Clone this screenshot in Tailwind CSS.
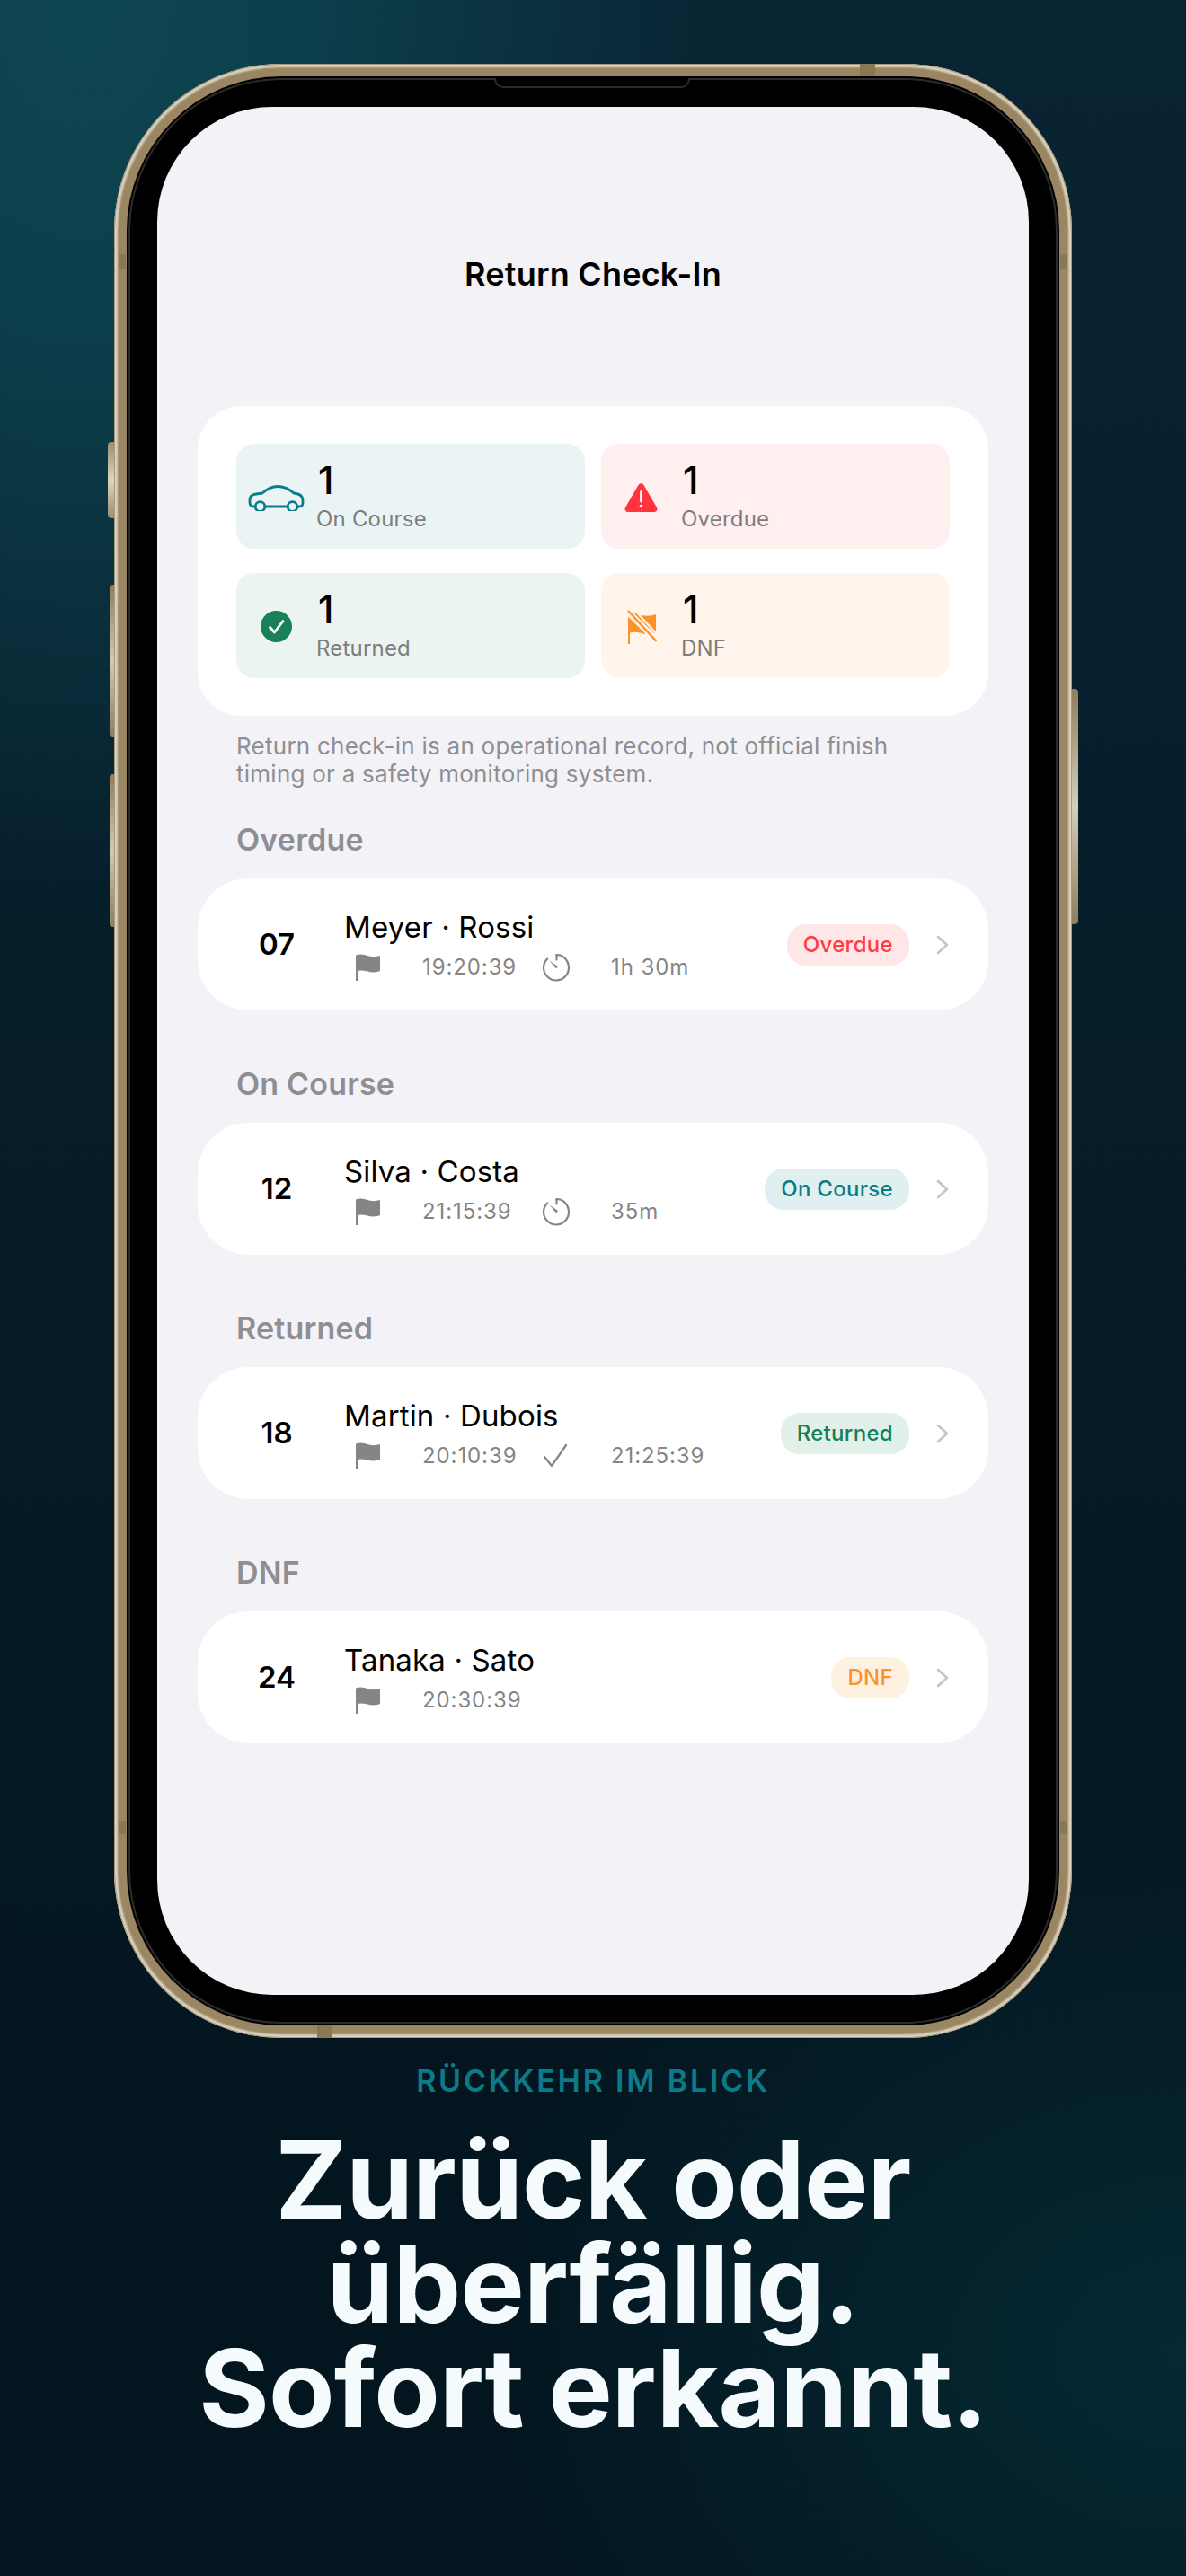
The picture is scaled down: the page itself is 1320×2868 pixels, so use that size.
<!DOCTYPE html>
<html lang="de">
<head>
<meta charset="UTF-8">
<title>Return Check-In</title>
<script src="https://cdn.jsdelivr.net/npm/@tailwindcss/browser@4"></script>
</head>
<body class="w-[1320px] h-[2868px] overflow-hidden font-[Inter,sans-serif] bg-[radial-gradient(ellipse_720px_1000px_at_90px_0px,#0e4552_0%,#0d3f4c_35%,#0e455200_100%),radial-gradient(ellipse_800px_600px_at_1320px_2620px,#052a34,#052a3400),linear-gradient(180deg,#092433,#03151f_85%)]">

<!-- shared icons -->
<svg class="hidden">
  <symbol id="flag" viewBox="0 0 28 30">
    <path d="M1 1.5C6 -0.5 10 0.5 14 2C18 3.5 23 3.5 28 2V19C23 21 18 20.5 14 19.5C10 18.500 6 18 3 19V30H1Z" fill="#858585"/>
  </symbol>
  <symbol id="timer" viewBox="0 0 32 32">
    <path d="M16.500 2C24 2 30 8.200 30 16.500C30 24 24 30.500 16 30.500C8.500 30.500 2 24 2 16.500C2 12.500 3.700 9 6.200 6.500" fill="none" stroke="#858585" stroke-width="2.200" stroke-linecap="round"/>
    <path d="M16.500 2V7.500" stroke="#858585" stroke-width="2.200" stroke-linecap="round"/>
    <path d="M8.500 8.500L18 15L16 17.500Z" fill="#858585"/>
  </symbol>
</svg>

<div class="flex flex-col items-center pt-[71px]">

  <!-- Phone -->
  <div class="relative w-[1066px] h-[2198px]">
    <!-- side buttons -->
    <div class="absolute left-[-7px] top-[421px] w-[12px] h-[85px] rounded-l-[4px] bg-linear-to-b from-[#9c8d6d] via-[#ddd6c2] to-[#9c8d6d]"></div>
    <div class="absolute left-[-5px] top-[580px] w-[10px] h-[169px] rounded-l-[3px] bg-linear-to-b from-[#8d7e5e] via-[#d2cab4] to-[#8d7e5e]"></div>
    <div class="absolute left-[-5px] top-[791px] w-[10px] h-[170px] rounded-l-[3px] bg-linear-to-b from-[#8d7e5e] via-[#d2cab4] to-[#8d7e5e]"></div>
    <div class="absolute right-[-7px] top-[696px] w-[12px] h-[262px] rounded-r-[4px] bg-linear-to-b from-[#8d7e5e] via-[#d6cfb9] to-[#8d7e5e]"></div>

    <!-- frame -->
    <div class="absolute inset-0 rounded-[186px] bg-[#9a8662] shadow-[inset_0_0_0_1px_#a99a7b,inset_0_0_2px_4px_#d9d2bf]"></div>
    <div class="absolute inset-[14px] rounded-[172px] bg-black"></div>
    <div class="absolute inset-[16px] rounded-[170px] border-2 border-[#2b2b2b]"></div>

    <!-- antenna bands -->
    <div class="absolute left-[5px] top-[212px] w-[8px] h-[17px] bg-[#8a7855]"></div>
    <div class="absolute left-[5px] top-[1956px] w-[8px] h-[15px] bg-[#8a7855]"></div>
    <div class="absolute right-[5px] top-[212px] w-[8px] h-[17px] bg-[#8a7855]"></div>
    <div class="absolute right-[5px] top-[1956px] w-[8px] h-[15px] bg-[#8a7855]"></div>
    <div class="absolute left-[830px] top-[0px] w-[17px] h-[14px] bg-[#8a7855]"></div>
    <div class="absolute left-[226px] bottom-[0px] w-[17px] h-[14px] bg-[#8a7855]"></div>

    <!-- notch -->
    <div class="absolute left-[423px] top-[16px] w-[218px] h-[11px] rounded-b-[10px] bg-black border-x-2 border-b-2 border-[#2b2b2b]"></div>

    <!-- Screen -->
    <div class="absolute left-[48px] top-[48px] w-[970px] h-[2102px] rounded-[128px] bg-[#f2f2f7] px-[45px] pt-[164px] overflow-hidden">
      <h1 class="text-[36px] leading-[44px] font-semibold text-black text-center tracking-[0.2px]">Return Check-In</h1>

      <!-- Stats -->
      <div class="mt-[125px] bg-white rounded-[48px] px-[43px] py-[42px] grid grid-cols-2 gap-x-[18px] gap-y-[27px]">
        <div class="h-[117px] rounded-[20px] bg-[#ebf4f5] flex items-center">
          <div class="w-[89px] flex justify-center pt-[2px]">
            <svg class="w-[63px] h-[30px]" viewBox="0 0 63 30" fill="none" stroke="#0a7c8a" stroke-width="2.800" stroke-linecap="round" stroke-linejoin="round">
              <path d="M8 25H6.500C3.500 25 2 23 2 20.500V18C2 13.500 5 11.500 9 11L16 10C21 5.500 26 2.500 33 2.500C41 2.500 46 5.500 51 10C56.500 10.500 61 13 61 18V21C61 24 59.500 25 57 25H55"/>
              <path d="M19 25H43"/>
              <circle cx="13.500" cy="25" r="5.300"/>
              <circle cx="49.500" cy="25" r="5.300"/>
            </svg>
          </div>
          <div class="pt-[2px]">
            <div class="ml-[2px] text-[42px] leading-[42px] font-medium text-black mb-[7px]">1</div>
            <div class="text-[24px] leading-[30px] tracking-[0.2px] text-[#7d7d7d]">On Course</div>
          </div>
        </div>
        <div class="h-[117px] rounded-[20px] bg-[#ffefef] flex items-center">
          <div class="w-[89px] flex justify-center pt-[2px]">
            <svg class="w-[37px] h-[32px]" viewBox="0 0 37 32">
              <path d="M15.500 2C16.800 -0.300 20.200 -0.300 21.500 2L36 27C37.300 29.300 35.700 32 33 32H4C1.300 32 -0.300 29.300 1 27Z" fill="#ff343d"/>
              <path d="M18.500 9.500V20" stroke="#fff" stroke-width="2.800" stroke-linecap="round"/>
              <circle cx="18.500" cy="25.500" r="1.800" fill="#fff"/>
            </svg>
          </div>
          <div class="pt-[2px]">
            <div class="ml-[2px] text-[42px] leading-[42px] font-medium text-black mb-[7px]">1</div>
            <div class="text-[24px] leading-[30px] tracking-[0.2px] text-[#7d7d7d]">Overdue</div>
          </div>
        </div>
        <div class="h-[117px] rounded-[20px] bg-[#ebf4f1] flex items-center">
          <div class="w-[89px] flex justify-center pt-[2px]">
            <svg class="w-[35px] h-[35px]" viewBox="0 0 35 35">
              <circle cx="17.500" cy="17.500" r="17.500" fill="#188158"/>
              <path d="M10.500 18.500L15.500 24L25 11.500" fill="none" stroke="#fff" stroke-width="2.800" stroke-linecap="round" stroke-linejoin="round"/>
            </svg>
          </div>
          <div class="pt-[2px]">
            <div class="ml-[2px] text-[42px] leading-[42px] font-medium text-black mb-[7px]">1</div>
            <div class="text-[24px] leading-[30px] tracking-[0.2px] text-[#7d7d7d]">Returned</div>
          </div>
        </div>
        <div class="h-[117px] rounded-[20px] bg-[#fff5ec] flex items-center">
          <div class="w-[89px] flex justify-center pt-[2px]">
            <svg class="w-[34px] h-[38px]" viewBox="0 0 34 38">
              <path d="M2 5C6 3 10 3.500 14 5C20 7 26 7.500 33 5V26C27 28 21 27 15 25.500C11 24.500 7 24.500 4 25.500V38H2Z" fill="#fd9226"/>
              <path d="M1 1.500L33 33" stroke="#fff5ec" stroke-width="7"/>
              <path d="M2 1L33.500 35" stroke="#fd9226" stroke-width="2.400"/>
              <path d="M10 1L33 26" stroke="#fff5ec" stroke-width="2.200"/>
            </svg>
          </div>
          <div class="pt-[2px]">
            <div class="ml-[2px] text-[42px] leading-[42px] font-medium text-black mb-[7px]">1</div>
            <div class="text-[24px] leading-[30px] tracking-[0.2px] text-[#7d7d7d]">DNF</div>
          </div>
        </div>
      </div>

      <p class="mt-[18px] px-[43px] text-[26px] leading-[31px] tracking-[0.25px] text-[#8e8e93]">Return check-in is an operational record, not official finish<br>timing or a safety monitoring system.</p>

      <!-- Overdue -->
      <h2 class="mt-[38px] px-[43px] text-[34px] leading-[40px] tracking-[0.2px] font-semibold text-[#8e8e93]">Overdue</h2>
      <div class="mt-[23px] h-[147px] rounded-[56px] bg-white pl-[44px] pr-[44px] flex items-center">
        <div class="w-[88px] mr-[31px] text-center text-[33px] font-semibold text-black">07</div>
        <div>
          <div class="text-[33px] leading-[40px] tracking-[0.15px] text-black">Meyer · Rossi</div>
          <div class="mt-[10px] h-[30px] flex items-center text-[24px] tracking-[0.9px] text-[#858585]">
            <div class="w-[87px] pl-[12px]"><svg class="w-[28px] h-[30px]"><use href="#flag"/></svg></div>
            <div class="w-[133px]">19:20:39</div>
            <div class="w-[77px]"><svg class="w-[32px] h-[32px]"><use href="#timer"/></svg></div>
            <div>1h 30m</div>
          </div>
        </div>
        <div class="ml-auto h-[46px] px-[18px] rounded-[21px] bg-[#ffe6e7] text-[#ff3b45] text-[24px] tracking-[0.3px] font-medium flex items-center">Overdue</div>
        <svg class="ml-[30px] w-[14px] h-[22px]" viewBox="0 0 14 22" fill="none" stroke="#c4c4c7" stroke-width="2.600" stroke-linecap="round" stroke-linejoin="round"><path d="M2 2L12 11L2 20"/></svg>
      </div>

      <!-- On Course -->
      <h2 class="mt-[62px] px-[43px] text-[34px] leading-[40px] tracking-[0.2px] font-semibold text-[#8e8e93]">On Course</h2>
      <div class="mt-[23px] h-[147px] rounded-[56px] bg-white pl-[44px] pr-[44px] flex items-center">
        <div class="w-[88px] mr-[31px] text-center text-[33px] font-semibold text-black">12</div>
        <div>
          <div class="text-[33px] leading-[40px] tracking-[0.15px] text-black">Silva · Costa</div>
          <div class="mt-[10px] h-[30px] flex items-center text-[24px] tracking-[0.9px] text-[#858585]">
            <div class="w-[87px] pl-[12px]"><svg class="w-[28px] h-[30px]"><use href="#flag"/></svg></div>
            <div class="w-[133px]">21:15:39</div>
            <div class="w-[77px]"><svg class="w-[32px] h-[32px]"><use href="#timer"/></svg></div>
            <div>35m</div>
          </div>
        </div>
        <div class="ml-auto h-[46px] px-[18px] rounded-[21px] bg-[#e0f0f0] text-[#0a7c86] text-[24px] tracking-[0.3px] font-medium flex items-center">On Course</div>
        <svg class="ml-[30px] w-[14px] h-[22px]" viewBox="0 0 14 22" fill="none" stroke="#c4c4c7" stroke-width="2.600" stroke-linecap="round" stroke-linejoin="round"><path d="M2 2L12 11L2 20"/></svg>
      </div>

      <!-- Returned -->
      <h2 class="mt-[62px] px-[43px] text-[34px] leading-[40px] tracking-[0.2px] font-semibold text-[#8e8e93]">Returned</h2>
      <div class="mt-[23px] h-[147px] rounded-[56px] bg-white pl-[44px] pr-[44px] flex items-center">
        <div class="w-[88px] mr-[31px] text-center text-[33px] font-semibold text-black">18</div>
        <div>
          <div class="text-[33px] leading-[40px] tracking-[0.15px] text-black">Martin · Dubois</div>
          <div class="mt-[10px] h-[30px] flex items-center text-[24px] tracking-[0.9px] text-[#858585]">
            <div class="w-[87px] pl-[12px]"><svg class="w-[28px] h-[30px]"><use href="#flag"/></svg></div>
            <div class="w-[133px]">20:10:39</div>
            <div class="w-[77px]">
              <svg class="w-[32px] h-[30px]" viewBox="0 0 32 30" fill="none" stroke="#858585" stroke-width="2.200" stroke-linecap="round" stroke-linejoin="round"><path d="M3 16L11 26L27 3"/></svg>
            </div>
            <div>21:25:39</div>
          </div>
        </div>
        <div class="ml-auto h-[46px] px-[18px] rounded-[21px] bg-[#e2f0ea] text-[#168056] text-[24px] tracking-[0.3px] font-medium flex items-center">Returned</div>
        <svg class="ml-[30px] w-[14px] h-[22px]" viewBox="0 0 14 22" fill="none" stroke="#c4c4c7" stroke-width="2.600" stroke-linecap="round" stroke-linejoin="round"><path d="M2 2L12 11L2 20"/></svg>
      </div>

      <!-- DNF -->
      <h2 class="mt-[62px] px-[43px] text-[34px] leading-[40px] tracking-[0.2px] font-semibold text-[#8e8e93]">DNF</h2>
      <div class="mt-[23px] h-[147px] rounded-[56px] bg-white pl-[44px] pr-[44px] flex items-center">
        <div class="w-[88px] mr-[31px] text-center text-[33px] font-semibold text-black">24</div>
        <div>
          <div class="text-[33px] leading-[40px] tracking-[0.15px] text-black">Tanaka · Sato</div>
          <div class="mt-[10px] h-[30px] flex items-center text-[24px] tracking-[0.9px] text-[#858585]">
            <div class="w-[87px] pl-[12px]"><svg class="w-[28px] h-[30px]"><use href="#flag"/></svg></div>
            <div class="w-[133px]">20:30:39</div>
          </div>
        </div>
        <div class="ml-auto h-[46px] px-[18px] rounded-[21px] bg-[#fff1e2] text-[#fd9226] text-[24px] tracking-[0.3px] font-medium flex items-center">DNF</div>
        <svg class="ml-[30px] w-[14px] h-[22px]" viewBox="0 0 14 22" fill="none" stroke="#c4c4c7" stroke-width="2.600" stroke-linecap="round" stroke-linejoin="round"><path d="M2 2L12 11L2 20"/></svg>
      </div>
    </div>
  </div>

  <!-- Caption -->
  <div class="mt-[28px] text-[34px] leading-[40px] font-semibold tracking-[2.800px] text-[#0c7a88]">RÜCKKEHR IM BLICK</div>
  <div class="mt-[32px] text-[120px] leading-[116px] font-bold tracking-[-0.8px] text-[#f5fafc] text-center">Zurück oder<br>überfällig.<br>Sofort erkannt.</div>
</div>

</body>
</html>
